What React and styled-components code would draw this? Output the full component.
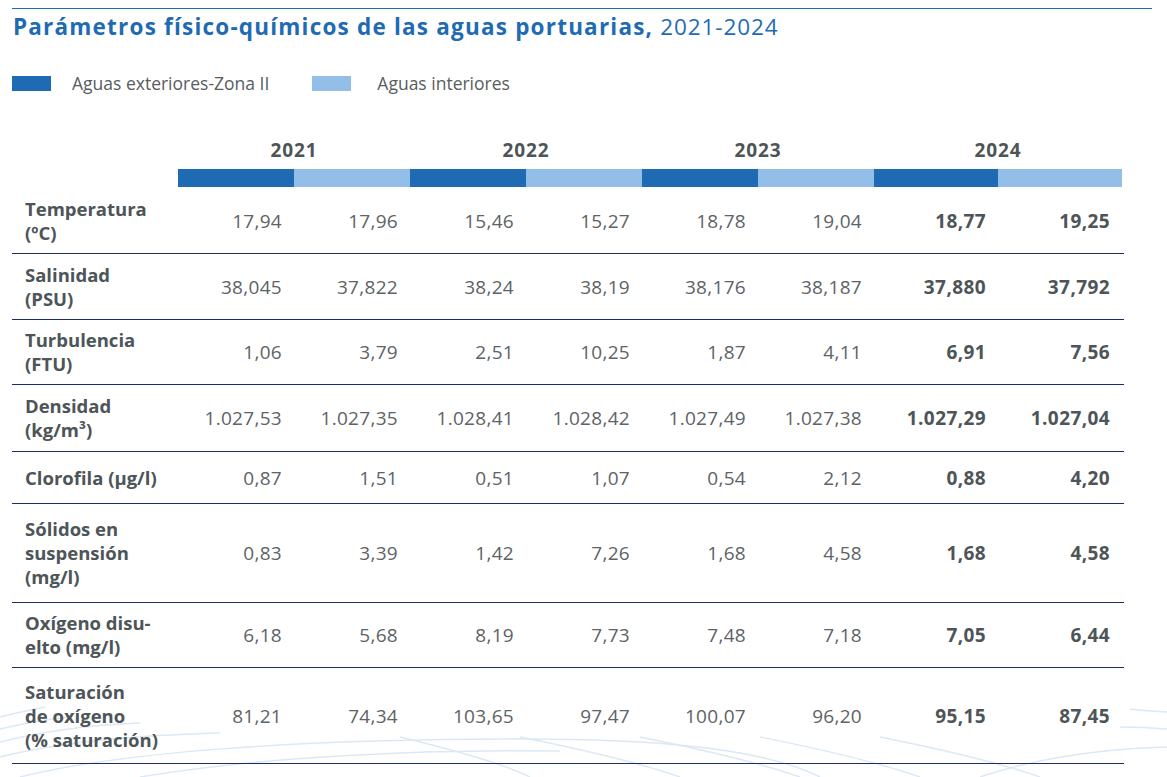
import React from 'react'
import styled, { createGlobalStyle } from 'styled-components'

const DARK = '#1f6bb3'
const LIGHT = '#93bee7'

const GlobalStyle = createGlobalStyle`
  html, body {
    margin: 0;
    padding: 0;
    background: #fff;
  }
  body {
    font-family: 'Open Sans', 'Noto Sans', 'Liberation Sans', sans-serif;
  }
`

const Page = styled.div`
  position: relative;
  box-sizing: border-box;
  width: 1167px;
  height: 777px;
  padding: 8px 0 0 12px;
  overflow: hidden;
`

const Waves = styled.svg`
  position: absolute;
  left: 0;
  bottom: 0;
  z-index: 0;
  pointer-events: none;
`

const Content = styled.div`
  position: relative;
  z-index: 1;
`

const TopRule = styled.div`
  width: 1140px;
  height: 1px;
  background: ${DARK};
`

const Title = styled.h1`
  margin: 4px 0 0 1px;
  font-size: 22.5px;
  line-height: 28px;
  font-weight: 700;
  color: ${DARK};
  letter-spacing: 1.2px;
  white-space: nowrap;

  span {
    font-weight: 400;
    letter-spacing: 0.9px;
  }
`

const Legend = styled.div`
  display: flex;
  align-items: center;
  margin-top: 30px;
`

const LegendItem = styled.div`
  display: flex;
  align-items: center;
  gap: ${p => p.$gap}px;
  margin-right: 43px;
  font-size: 17.5px;
  line-height: 24px;
  color: #575d60;
`

const Swatch = styled.span`
  width: 39px;
  height: 15px;
  background: ${p => p.$color};
`

const Table = styled.div`
  margin-top: 43px;
  width: 1112px;
`

const cols = '166px repeat(6, 116px) repeat(2, 124px)'

const YearRow = styled.div`
  display: grid;
  grid-template-columns: ${cols};
`

const Year = styled.div`
  grid-column: span 2;
  text-align: center;
  font-size: 19px;
  line-height: 24px;
  font-weight: 700;
  color: #4d5558;
  letter-spacing: 0.9px;
`

const BarRow = styled.div`
  display: grid;
  grid-template-columns: ${cols};
  margin: 7px 0 1px;
  height: 18px;
`

const BarSeg = styled.div`
  background: ${p => (p.$dark ? DARK : LIGHT)};
`

const Row = styled.div`
  display: grid;
  grid-template-columns: ${cols};
  align-items: center;
  height: ${p => p.$h}px;
  border-bottom: 1px solid #1d2d6c;
  box-sizing: border-box;
`

const Label = styled.div`
  padding-left: 13px;
  font-size: 18.5px;
  line-height: 24px;
  font-weight: 700;
  color: #4d5558;
`

const Value = styled.div`
  padding-right: 12px;
  text-align: right;
  font-size: 19px;
  line-height: 24px;
  font-weight: ${p => (p.$bold ? 700 : 400)};
  color: ${p => (p.$bold ? '#4d5558' : '#5d6366')};
  letter-spacing: ${p => (p.$bold ? 0.4 : 0.3)}px;
`

const rows = [
  { h: 66, label: <>Temperatura<br />(ºC)</>, v: ['17,94', '17,96', '15,46', '15,27', '18,78', '19,04', '18,77', '19,25'] },
  { h: 66, label: <>Salinidad<br />(PSU)</>, v: ['38,045', '37,822', '38,24', '38,19', '38,176', '38,187', '37,880', '37,792'] },
  { h: 65, label: <>Turbulencia<br />(FTU)</>, v: ['1,06', '3,79', '2,51', '10,25', '1,87', '4,11', '6,91', '7,56'] },
  { h: 67, label: <>Densidad<br />(kg/m³)</>, v: ['1.027,53', '1.027,35', '1.028,41', '1.028,42', '1.027,49', '1.027,38', '1.027,29', '1.027,04'] },
  { h: 52, label: <>Clorofila (µg/l)</>, v: ['0,87', '1,51', '0,51', '1,07', '0,54', '2,12', '0,88', '4,20'] },
  { h: 99, label: <>Sólidos en<br />suspensión<br />(mg/l)</>, v: ['0,83', '3,39', '1,42', '7,26', '1,68', '4,58', '1,68', '4,58'] },
  { h: 65, label: <>Oxígeno disu-<br />elto (mg/l)</>, v: ['6,18', '5,68', '8,19', '7,73', '7,48', '7,18', '7,05', '6,44'] },
  { h: 96, label: <>Saturación<br />de oxígeno<br />(% saturación)</>, v: ['81,21', '74,34', '103,65', '97,47', '100,07', '96,20', '95,15', '87,45'] },
]

const WaveLines = () => (
  <Waves width='1167' height='90' viewBox='0 0 1167 90' aria-hidden>
    <g fill='none' stroke='#dce8f4' strokeWidth='1.4'>
      <path d='M0 30 C 20 25, 35 22, 45 20' />
      <path d='M0 42 C 25 36, 50 32, 70 30' />
      <path d='M0 55 C 40 45, 90 38, 140 36' />
      <path d='M0 70 C 60 55, 140 48, 220 46' />
      <path d='M20 90 C 120 65, 300 52, 520 52 C 650 52, 760 60, 820 90' />
      <path d='M140 90 C 260 70, 420 62, 560 64' />
      <path d='M400 50 C 450 62, 500 75, 530 90' />
      <path d='M520 50 C 580 62, 640 76, 680 90' />
      <path d='M640 50 C 700 62, 760 76, 800 90' />
      <path d='M760 50 C 820 62, 880 76, 920 90' />
      <path d='M880 50 C 940 62, 1000 76, 1040 90' />
      <path d='M1130 22 C 1145 24, 1155 24, 1167 25' />
      <path d='M1120 40 C 1140 40, 1155 41, 1167 42' />
      <path d='M980 90 C 1040 70, 1100 62, 1167 60' />
    </g>
  </Waves>
)

export default function App() {
  return (
    <Page>
      <GlobalStyle />
      <WaveLines />
      <Content>
        <TopRule />
        <Title>
          Parámetros físico-químicos de las aguas portuarias, <span>2021-2024</span>
        </Title>
        <Legend>
          <LegendItem $gap={21}>
            <Swatch $color={DARK} />
            Aguas exteriores-Zona II
          </LegendItem>
          <LegendItem $gap={26}>
            <Swatch $color={LIGHT} />
            Aguas interiores
          </LegendItem>
        </Legend>
        <Table>
          <YearRow>
            <div />
            {['2021', '2022', '2023', '2024'].map(y => (
              <Year key={y}>{y}</Year>
            ))}
          </YearRow>
          <BarRow>
            <div />
            {Array.from({ length: 8 }).map((_, i) => (
              <BarSeg key={i} $dark={i % 2 === 0} />
            ))}
          </BarRow>
          {rows.map((r, i) => (
            <Row key={i} $h={r.h}>
              <Label>{r.label}</Label>
              {r.v.map((v, j) => (
                <Value key={j} $bold={j >= 6}>{v}</Value>
              ))}
            </Row>
          ))}
        </Table>
      </Content>
    </Page>
  )
}
